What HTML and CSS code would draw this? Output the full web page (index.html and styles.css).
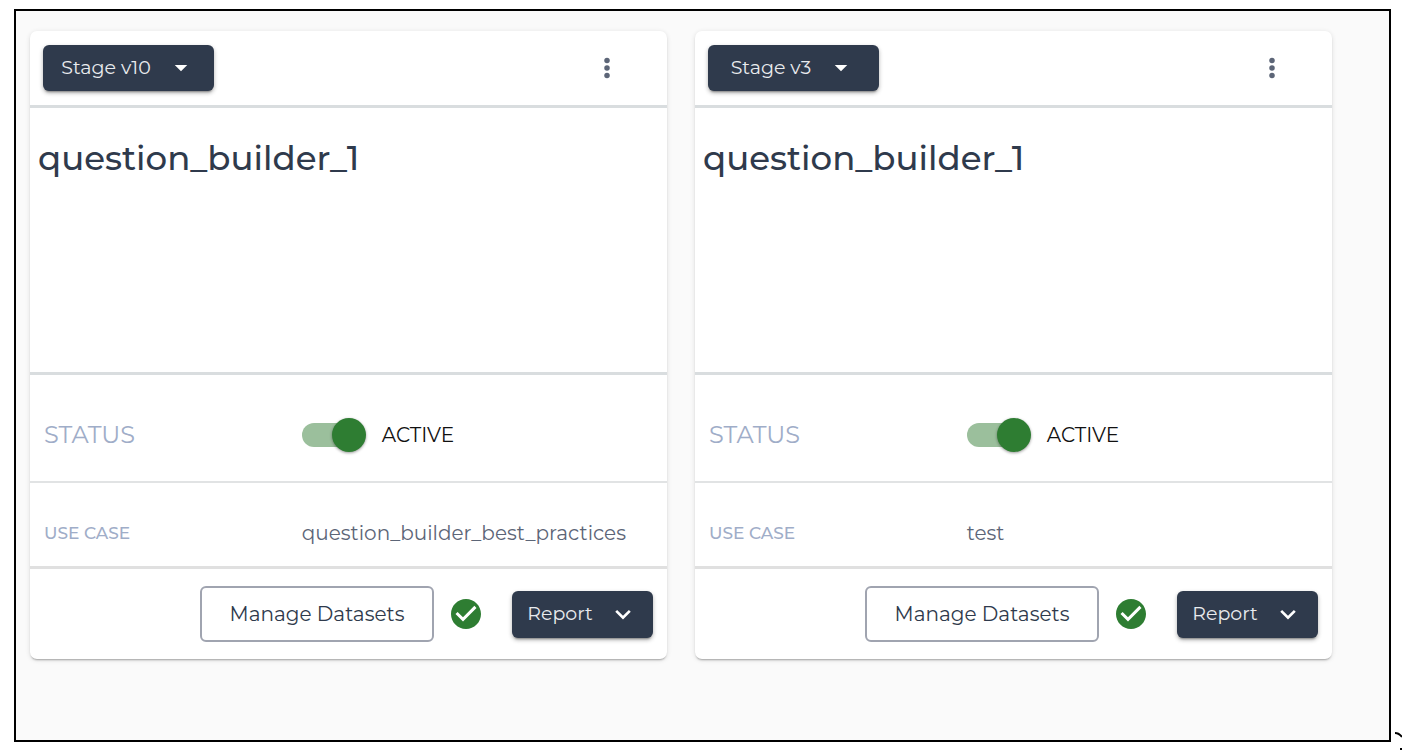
FILE: index.html
```html
<!doctype html>
<html lang="en">
<head>
  <meta charset="UTF-8">
  <meta name="viewport" content="width=device-width, initial-scale=1.0">
  <title>question_builder_1</title>
  <link rel="stylesheet" href="styles.css">
</head>
<body>
<main class="board">
  <article class="card">
    <header class="card-header">
      <button class="btn btn-dark btn-stage" type="button" aria-haspopup="menu">
        Stage v10
        <svg class="icon" viewBox="0 0 24 24" aria-hidden="true"><path d="M7 9.5l5 5 5-5z"/></svg>
      </button>
      <button class="btn-more" type="button" aria-label="More actions">
        <svg class="icon" viewBox="0 0 24 24" aria-hidden="true"><circle cx="12" cy="6" r="2.2"/><circle cx="12" cy="12" r="2.2"/><circle cx="12" cy="18" r="2.2"/></svg>
      </button>
    </header>
    <div class="card-title">
      <h2>question_builder_1</h2>
    </div>
    <div class="row row-status">
      <span class="status-label">STATUS</span>
      <label class="switch">
        <input type="checkbox" role="switch" checked>
        ACTIVE
      </label>
    </div>
    <div class="row row-case">
      <span class="case-label">USE CASE</span>
      <span class="case-value">question_builder_best_practices</span>
    </div>
    <footer class="card-footer">
      <button class="btn btn-outline" type="button">Manage Datasets</button>
      <svg class="check" viewBox="0 0 24 24" aria-hidden="true"><path d="M12 2C6.48 2 2 6.48 2 12s4.48 10 10 10 10-4.48 10-10S17.52 2 12 2zm-2 15l-5-5 1.41-1.41L10 14.17l7.59-7.59L19 8l-9 9z"/></svg>
      <button class="btn btn-dark btn-report" type="button" aria-haspopup="menu">
        Report
        <svg class="icon" viewBox="0 0 24 24" aria-hidden="true"><path d="M7.3 8.7L12 13.4l4.7-4.7L18.2 10.2 12 16.4 5.8 10.2z"/></svg>
      </button>
    </footer>
  </article>

  <article class="card">
    <header class="card-header">
      <button class="btn btn-dark btn-stage" type="button" aria-haspopup="menu">
        Stage v3
        <svg class="icon" viewBox="0 0 24 24" aria-hidden="true"><path d="M7 9.5l5 5 5-5z"/></svg>
      </button>
      <button class="btn-more" type="button" aria-label="More actions">
        <svg class="icon" viewBox="0 0 24 24" aria-hidden="true"><circle cx="12" cy="6" r="2.2"/><circle cx="12" cy="12" r="2.2"/><circle cx="12" cy="18" r="2.2"/></svg>
      </button>
    </header>
    <div class="card-title">
      <h2>question_builder_1</h2>
    </div>
    <div class="row row-status">
      <span class="status-label">STATUS</span>
      <label class="switch">
        <input type="checkbox" role="switch" checked>
        ACTIVE
      </label>
    </div>
    <div class="row row-case">
      <span class="case-label">USE CASE</span>
      <span class="case-value">test</span>
    </div>
    <footer class="card-footer">
      <button class="btn btn-outline" type="button">Manage Datasets</button>
      <svg class="check" viewBox="0 0 24 24" aria-hidden="true"><path d="M12 2C6.48 2 2 6.48 2 12s4.48 10 10 10 10-4.48 10-10S17.52 2 12 2zm-2 15l-5-5 1.41-1.41L10 14.17l7.59-7.59L19 8l-9 9z"/></svg>
      <button class="btn btn-dark btn-report" type="button" aria-haspopup="menu">
        Report
        <svg class="icon" viewBox="0 0 24 24" aria-hidden="true"><path d="M7.3 8.7L12 13.4l4.7-4.7L18.2 10.2 12 16.4 5.8 10.2z"/></svg>
      </button>
    </footer>
  </article>
</main>
<svg class="corner-mark" viewBox="0 0 7 18" aria-hidden="true"><path d="M0 1Q4 1 7 5M5 17H7"/></svg>
</body>
</html>
```

FILE: styles.css
```css
* {
  margin: 0;
  padding: 0;
  box-sizing: border-box;
}
body {
  min-height: 100vh;
  display: flex;
  padding: 9px 11px 8px 14px;
  background: #fff;
  color: #2f3a4c;
  font-family: Montserrat, Inter, sans-serif;
  font-size: 20px;
  line-height: 24px;
}
.board {
  flex: 1;
  display: grid;
  grid-template-columns: 1fr 1fr;
  align-items: start;
  gap: 28px;
  padding: 20px 57px 20px 14px;
  border: 2px solid #000;
  background: #fafafa;
}
.card {
  border-radius: 7px;
  background: #fff;
  box-shadow: 0 2px 2px -1px rgba(0, 0, 0, .3), 0 1px 5px rgba(0, 0, 0, .12);
}
.card-header {
  display: flex;
  align-items: center;
  justify-content: space-between;
  padding: 14px 45px 14px 13px;
  border-bottom: 3px solid #d9dddf;
}
.card-title {
  min-height: 267px;
  padding: 28px 8px;
  border-bottom: 3px solid #d9dddf;
}
.card-title h2 {
  font-size: 34px;
  line-height: 44px;
  font-weight: 500;
}

/* buttons */
button {
  border: 0;
  background: none;
  color: inherit;
  font: inherit;
  cursor: pointer;
}
.btn {
  display: flex;
  align-items: center;
  justify-content: center;
  border-radius: 6px;
}
.btn-dark {
  gap: 15px;
  background: #2f3a4c;
  color: #e9ebee;
  font-size: 19px;
  box-shadow: 0 3px 2px -2px rgba(0, 0, 0, .3), 0 2px 4px rgba(0, 0, 0, .3);
}
.btn-stage {
  min-width: 171px;
  height: 46px;
}
.btn-report {
  min-width: 141px;
  height: 47px;
  margin-left: 14px;
}
.btn-outline {
  min-width: 234px;
  height: 56px;
  border: 2px solid #a0a4b0;
}
.btn-more {
  display: flex;
  color: #5c6577;
}
.icon {
  width: 30px;
  height: 30px;
  fill: currentColor;
}
.btn-dark .icon {
  color: #fff;
}

/* detail rows */
.row {
  display: grid;
  grid-template-columns: 42% 1fr;
  column-gap: 2px;
  align-items: center;
  padding: 0 14px;
}
.row-status {
  height: 108px;
  padding-top: 14px;
  border-bottom: 2px solid #e1e3e4;
}
.row-case {
  height: 86px;
  padding-top: 16px;
  border-bottom: 3px solid #e0e0e0;
}
.status-label {
  color: #9fadc8;
  font-size: 24px;
}
.case-label {
  color: #9fadc8;
  font-size: 17px;
  font-weight: 500;
}
.case-value {
  color: #5c6577;
}
.switch {
  display: flex;
  align-items: center;
  gap: 16px;
  color: #111;
}
.switch input {
  appearance: none;
  display: grid;
  align-items: center;
  width: 64px;
  height: 34px;
  cursor: pointer;
}
.switch input::before,
.switch input::after {
  content: "";
  grid-area: 1 / 1;
}
.switch input::before {
  width: 58px;
  height: 24px;
  border-radius: 12px;
  background: #bdbdbd;
}
.switch input::after {
  width: 34px;
  height: 34px;
  border-radius: 50%;
  background: #fff;
  box-shadow: 0 1px 3px rgba(0, 0, 0, .4);
}
.switch input:checked::before {
  background: #9bbf9c;
}
.switch input:checked::after {
  justify-self: end;
  background: #2e7d32;
}

.card-footer {
  display: flex;
  align-items: center;
  justify-content: flex-end;
  gap: 14px;
  padding: 17px 14px;
}
.check {
  width: 36px;
  height: 36px;
  fill: #2e7d32;
}

.corner-mark {
  position: absolute;
  right: 0;
  bottom: 0;
  width: 7px;
  height: 18px;
  fill: none;
  stroke: #000;
  stroke-width: 2;
}
```
